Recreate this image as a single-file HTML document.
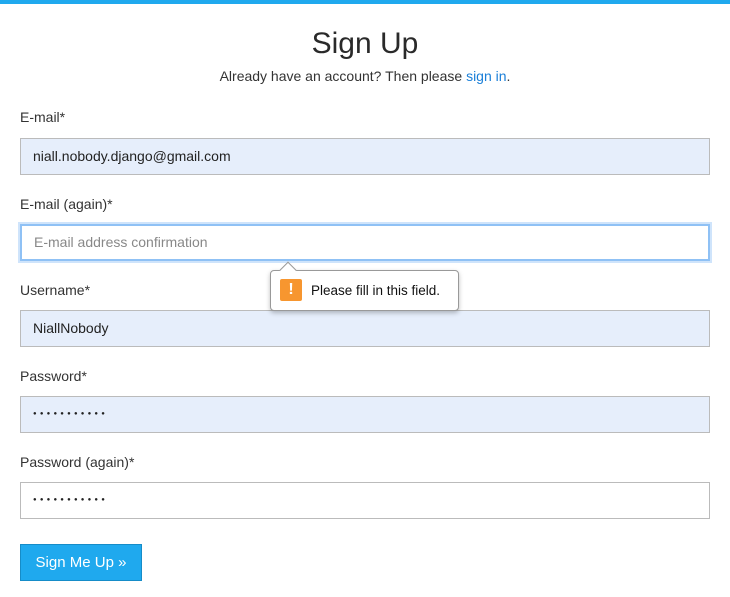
<!DOCTYPE html><html><head><style>
body{margin:0;width:730px;height:597px;background:#fff;font-family:"Liberation Sans",sans-serif;color:#222;position:relative;overflow:hidden}
.bar{position:absolute;left:0;top:0;width:730px;height:4px;background:#1fa9ee}
.a{position:absolute}
.lbl{position:absolute;left:20px;font-size:14px;color:#333}
.in{position:absolute;left:20px;font-size:14px;line-height:35px;padding-left:12px;box-sizing:border-box;width:690px;height:37px;border:1px solid #bbb;background:#e6eefb;color:#222}
.dots{font-size:6px;letter-spacing:3.2px}
</style></head><body>
<div class="bar"></div>
<div class="a" style="left:0;width:730px;top:27px;text-align:center;font-size:30px;color:#2a2a2a">Sign Up</div>
<div class="a" style="left:0;width:730px;top:68px;text-align:center;font-size:14px;color:#333">Already have an account? Then please <span style="color:#1a7fd8">sign in</span>.</div>
<div class="lbl" style="top:109px">E-mail*</div>
<div class="in" style="top:138px">niall.nobody.django@gmail.com</div>
<div class="lbl" style="top:196px">E-mail (again)*</div>
<div class="in" style="top:224px;background:#fff;border:2px solid #8fc1f5;box-shadow:0 0 0 2px #cfe4fb;color:#888;line-height:33px">E-mail address confirmation</div>
<div class="lbl" style="top:282px">Username*</div>
<div class="in" style="top:310px">NiallNobody</div>
<div class="lbl" style="top:368px">Password*</div>
<div class="in dots" style="top:396px">●●●●●●●●●●●</div>
<div class="lbl" style="top:454px">Password (again)*</div>
<div class="in dots" style="top:482px;background:#fff">●●●●●●●●●●●</div>
<div class="a" style="left:20px;top:544px;width:122px;height:37px;background:#1fa9ee;border:1px solid #168cc8;box-sizing:border-box;color:#fff;font-size:15px;line-height:35px;text-align:center">Sign Me Up »</div>
<div class="a" style="left:270px;top:270px;width:189px;height:41px;background:#fff;border:1px solid #999;border-radius:4px;box-shadow:0 2px 5px rgba(0,0,0,.25);box-sizing:border-box">
<div class="a" style="left:11px;top:-7px;width:11px;height:11px;background:#fff;border-left:1px solid #999;border-top:1px solid #999;transform:rotate(45deg)"></div>
<div class="a" style="left:9px;top:8px;width:22px;height:22px;background:#f7962f;border-radius:2px;color:#fff;font-weight:bold;font-size:16px;text-align:center;line-height:22px">!</div>
<div class="a" style="left:40px;top:12px;font-size:13.5px;color:#111;white-space:nowrap">Please fill in this field.</div>
</div>
</body></html>
